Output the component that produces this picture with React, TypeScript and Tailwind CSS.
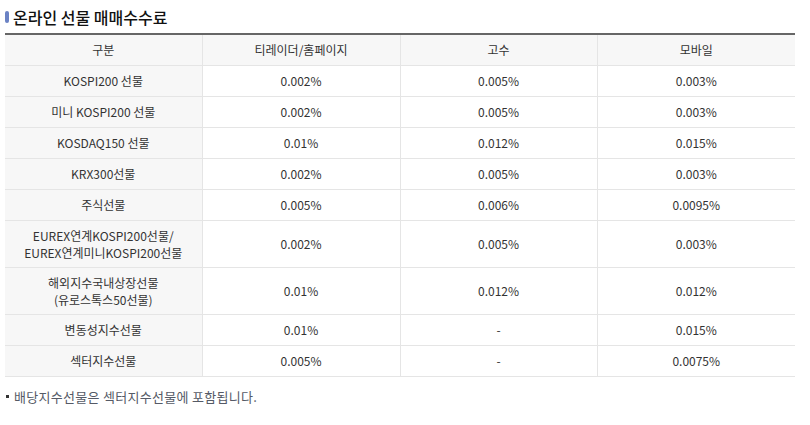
import React from "react";

const rows: [React.ReactNode, string, string, string][] = [
  ["KOSPI200 선물", "0.002%", "0.005%", "0.003%"],
  ["미니 KOSPI200 선물", "0.002%", "0.005%", "0.003%"],
  ["KOSDAQ150 선물", "0.01%", "0.012%", "0.015%"],
  ["KRX300선물", "0.002%", "0.005%", "0.003%"],
  ["주식선물", "0.005%", "0.006%", "0.0095%"],
  [
    <>
      EUREX연계KOSPI200선물/
      <br />
      EUREX연계미니KOSPI200선물
    </>,
    "0.002%",
    "0.005%",
    "0.003%",
  ],
  [
    <>
      해외지수국내상장선물
      <br />
      (유로스톡스50선물)
    </>,
    "0.01%",
    "0.012%",
    "0.012%",
  ],
  ["변동성지수선물", "0.01%", "-", "0.015%"],
  ["섹터지수선물", "0.005%", "-", "0.0075%"],
];

export default function App() {
  return (
    <div
      className="w-[810px] h-[425px] bg-white text-[#333]"
      style={{ fontFamily: '"Noto Sans CJK KR", "Noto Sans", sans-serif' }}
    >
      <div className="px-[5px] pt-[6px]">
        <div className="flex items-center h-[22px]">
          <span className="w-[4px] h-[12px] rounded-[2px] bg-[#6b82c4] mr-[4px]" />
          <h2 className="text-[16px] leading-[22px] text-[#111] font-medium">온라인 선물 매매수수료</h2>
        </div>
        <table className="mt-[5px] w-[790px] border-collapse table-fixed border-t-[2px] border-t-[#666] text-[12px] text-center">
          <colgroup>
            <col className="w-[197px]" />
            <col className="w-[198px]" />
            <col className="w-[197px]" />
            <col className="w-[198px]" />
          </colgroup>
          <thead>
            <tr className="h-[31px] bg-[#f7f7f7]">
              {["구분", "티레이더/홈페이지", "고수", "모바일"].map((h, i) => (
                <th
                  key={h}
                  className={`font-normal border-b border-[#e5e5e5] ${i < 3 ? "border-r" : ""}`}
                >
                  {h}
                </th>
              ))}
            </tr>
          </thead>
          <tbody>
            {rows.map((r, idx) => (
              <tr key={idx} className={idx === 5 || idx === 6 ? "h-[47px]" : "h-[31px]"}>
                <td className="bg-[#f7f7f7] border-b border-r border-[#e5e5e5] leading-[17px]">{r[0]}</td>
                <td className="border-b border-r border-[#e5e5e5]">{r[1]}</td>
                <td className="border-b border-r border-[#e5e5e5]">{r[2]}</td>
                <td className="border-b border-[#e5e5e5]">{r[3]}</td>
              </tr>
            ))}
          </tbody>
        </table>
        <p className="mt-[11px] text-[13px] leading-[18px] text-[#555a66] flex items-center">
          <span className="w-[3px] h-[3px] bg-[#333] mr-[5px] ml-[1px]" />
          <span className="tracking-[0.3px]">배당지수선물은 섹터지수선물에 포함됩니다.</span>
        </p>
      </div>
    </div>
  );
}
